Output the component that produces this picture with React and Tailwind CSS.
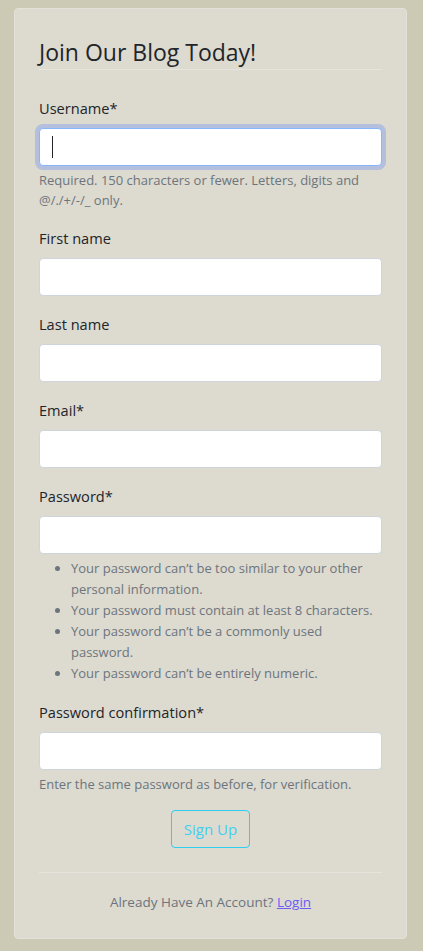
import React from 'react'

const font = { fontFamily: '"Open Sans", "Noto Sans", sans-serif' }

function Field({ label, focused, children }) {
  return (
    <div className="mb-4">
      <label className="block text-[14.6px] leading-6 text-[#212529] mb-2">{label}</label>
      <div
        className={`h-[38px] rounded-[4px] bg-white border ${
          focused ? 'border-[#86b7fe] ring-4 ring-[#b3bfdc]' : 'border-[#ced4da]'
        } flex items-center px-3`}
      >
        {focused && <span className="block w-px h-[22px] bg-[#212529]" />}
      </div>
      {children}
    </div>
  )
}

export default function App() {
  return (
    <div className="min-h-[951px] bg-[#cccab4] pt-2 pb-[13px]" style={font}>
      <div className="ml-[14px] w-[393px] rounded-[4px] bg-[#dddad0] border border-[#e3e1d9] px-6 pt-7 pb-[26px]">
        <div className="text-[23px] leading-[30px] text-[#212529] pb-[2px] border-b border-[#e6e4dc] mb-[26px]">
          Join Our Blog Today!
        </div>

        <Field label="Username*" focused>
          <p className="mt-1 text-[13px] leading-5 text-[#6c757d]">
            Required. 150 characters or fewer. Letters, digits and @/./+/-/_ only.
          </p>
        </Field>
        <Field label="First name" />
        <Field label="Last name" />
        <Field label="Email*" />
        <Field label="Password*">
          <ul className="mt-1 pl-8 list-disc text-[13px] leading-[21px] text-[#6c757d] marker:text-[#6c757d]">
            <li>Your password can’t be too similar to your other personal information.</li>
            <li>Your password must contain at least 8 characters.</li>
            <li>Your password can’t be a commonly used password.</li>
            <li>Your password can’t be entirely numeric.</li>
          </ul>
        </Field>
        <Field label="Password confirmation*">
          <p className="mt-1 text-[13px] leading-5 text-[#6c757d]">
            Enter the same password as before, for verification.
          </p>
        </Field>

        <div className="flex justify-center">
          <button className="h-[38px] px-3 rounded-[4px] border border-[#2fcdf0] text-[15px] text-[#3fd0f0]">
            Sign Up
          </button>
        </div>

        <div className="mt-6 border-t border-[#e6e4dc] pt-[19px] text-center text-[13.5px] leading-5 text-[#6c757d]">
          Already Have An Account?{' '}
          <a href="#" className="text-[#6a5cf5] underline">Login</a>
        </div>
      </div>
    </div>
  )
}
